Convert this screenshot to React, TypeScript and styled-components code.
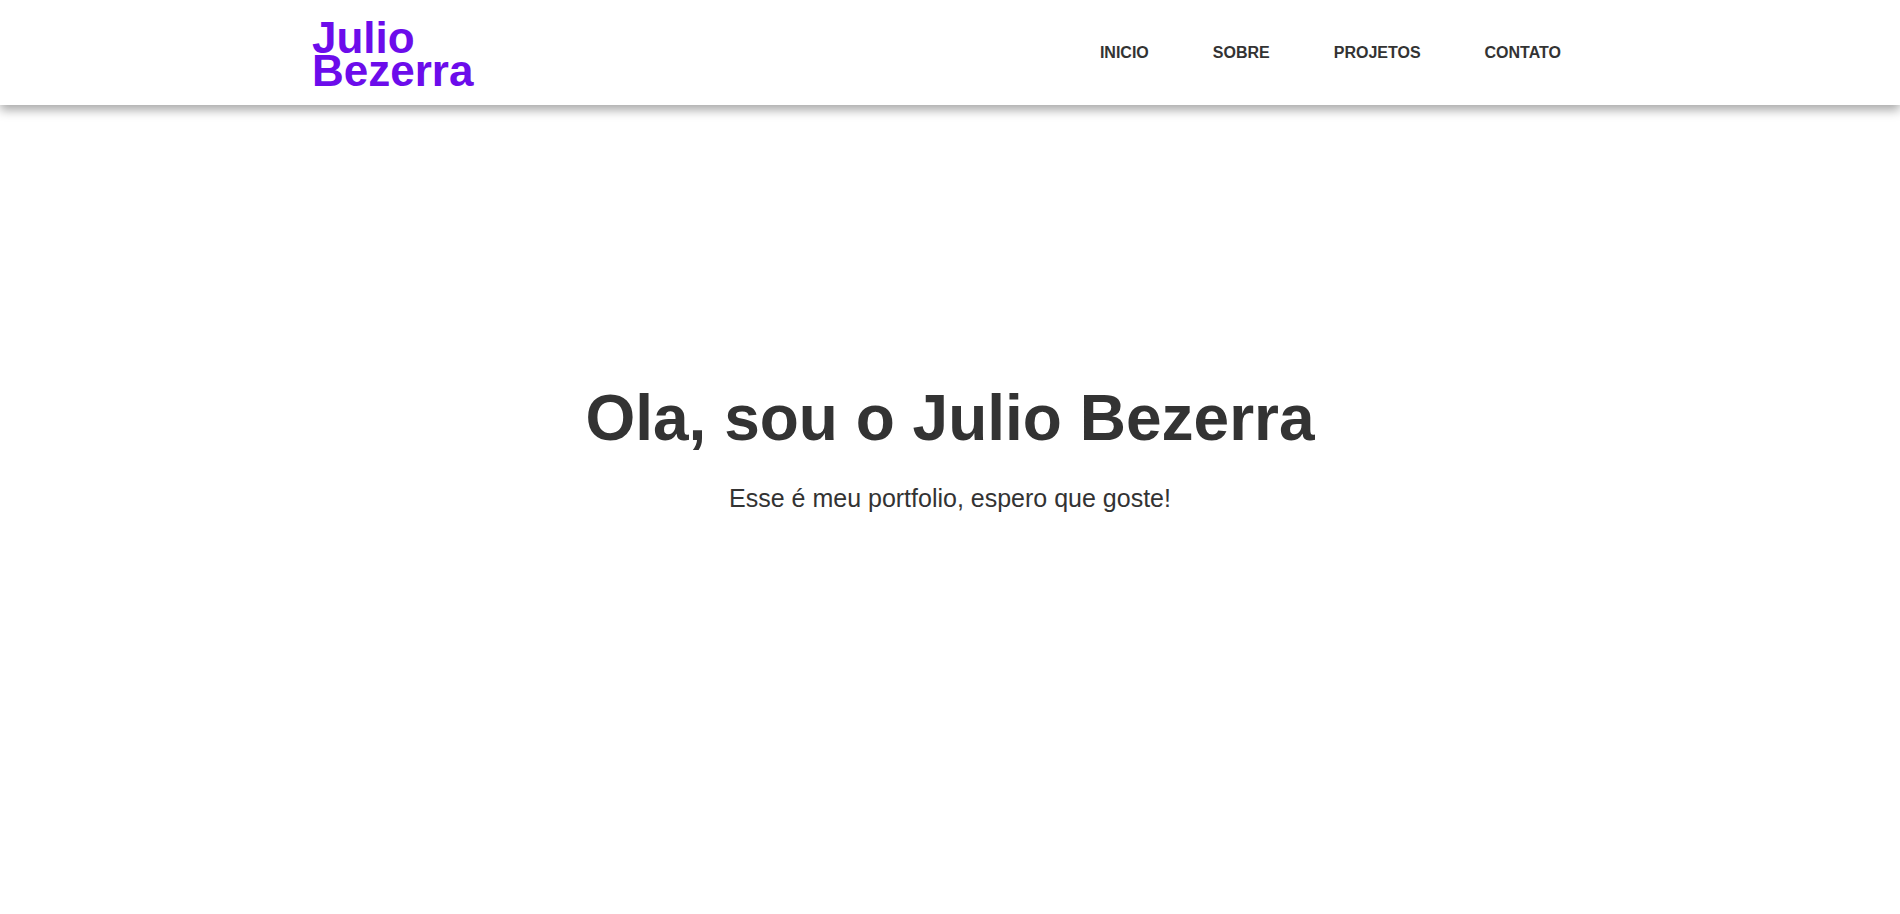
import React from "react";
import styled, { createGlobalStyle } from "styled-components";

const GlobalStyle = createGlobalStyle`
  * {
    box-sizing: border-box;
  }
  body {
    margin: 0;
    background: #fff;
    font-family: "Liberation Sans", Arial, sans-serif;
    color: #333;
  }
`;

//styles start
const Header = styled.header`
  height: 105px;
  background: #fff;
  box-shadow: 0 5px 10px rgba(0, 0, 0, 0.35);
  position: relative;
  z-index: 1;
`;

const HeaderInner = styled.div`
  max-width: 1286px;
  height: 100%;
  margin: 0 auto;
  padding-left: 5px;
  display: flex;
  align-items: center;
  justify-content: space-between;
`;

const Brand = styled.a`
  display: block;
  color: #6c0ceb;
  font-size: 44px;
  font-weight: 700;
  text-decoration: none;
  padding-top: 2px;

  span {
    display: block;
    height: 33px;
    line-height: 33px;
  }
`;

const NavList = styled.ul`
  display: flex;
  list-style: none;
  margin: 0;
  padding: 0;
`;

const NavLink = styled.a`
  display: block;
  padding: 8px 32px;
  color: #333;
  font-size: 16px;
  font-weight: 700;
  text-decoration: none;
  text-transform: uppercase;
`;

const Hero = styled.section`
  min-height: calc(100vh - 105px);
  display: flex;
  flex-direction: column;
  align-items: center;
  justify-content: center;
  padding-bottom: 125px;
  text-align: center;
`;

const Title = styled.h1`
  margin: 0 0 29px;
  font-size: 64px;
  font-weight: 700;
  color: #333;
`;

const Subtitle = styled.p`
  margin: 0;
  font-size: 25px;
  color: #333;
`;
//styles end

const links = ["Inicio", "Sobre", "Projetos", "Contato"];

const App: React.FC = () => {
  return (
    <>
      <GlobalStyle />
      <Header>
        <HeaderInner>
          <Brand href="#">
            <span>Julio</span>
            <span>Bezerra</span>
          </Brand>
          <nav>
            <NavList>
              {links.map((link) => (
                <li key={link}>
                  <NavLink href={`#${link.toLowerCase()}`}>{link}</NavLink>
                </li>
              ))}
            </NavList>
          </nav>
        </HeaderInner>
      </Header>
      <Hero id="inicio">
        <Title>Ola, sou o Julio Bezerra</Title>
        <Subtitle>Esse é meu portfolio, espero que goste!</Subtitle>
      </Hero>
    </>
  );
};

export default App;
